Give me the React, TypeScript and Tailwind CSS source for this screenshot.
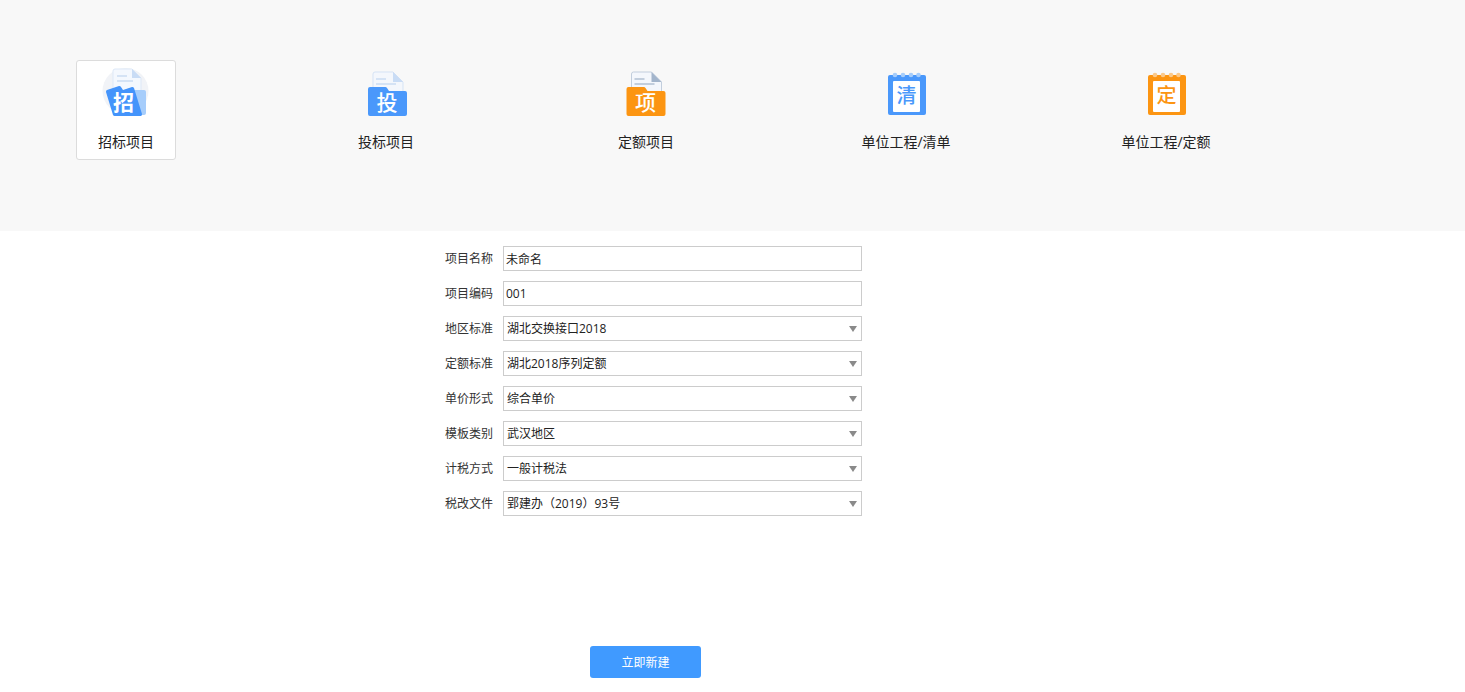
const cjk = "'Open Sans', 'Noto Sans CJK SC', sans-serif";

function Glyph({ ch, x, y, fill, size = 20, weight = 700 }: { ch: string; x: number; y: number; fill: string; size?: number; weight?: number }) {
  return (
    <text x={x} y={y} textAnchor="middle" fontSize={size} fontWeight={weight} fill={fill} style={{ fontFamily: "'Noto Sans CJK SC', sans-serif" }}>
      {ch}
    </text>
  );
}

function TenderIcon() {
  return (
    <svg width="60" height="60" viewBox="0 0 60 60">
      <circle cx="29.5" cy="29" r="23" fill="#f1f3f7" />
      <path d="M19 7h17l9 9v30H17V9a2 2 0 0 1 2-2z" fill="#f4f8fe" stroke="#dde8f7" />
      <path d="M36 7l9 9h-9z" fill="#c9dcf5" />
      <path d="M21 14h10M21 19h16" stroke="#d5e3f5" strokeWidth="2" />
      <path d="M38 28h10a2 2 0 0 1 2 2v21a2 2 0 0 1-2 2H38z" fill="#a6cdfb" />
      <path d="M11 28l12-4a2 2 0 0 1 2 1l2 3 9-3a2 2 0 0 1 2 1l8 26a2 2 0 0 1-1 2H19a2 2 0 0 1-2-1L10 30a2 2 0 0 1 1-2z" fill="#4494fb" />
      <Glyph ch="招" x={27.5} y={48} fill="#ffffff" size={21} />
    </svg>
  );
}

function FolderIcon({ ch, color, fold, line, dx = 0 }: { ch: string; color: string; fold: string; line: string; dx?: number }) {
  return (
    <svg width="60" height="60" viewBox="0 0 60 60">
      <g transform={`translate(${dx} 0)`}>
        <path d="M19 10h18l10 10v14H17V12a2 2 0 0 1 2-2z" fill="#f4f7fc" stroke={line} />
        <path d="M37 10l10 10H37z" fill={fold} />
        <path d="M20 17h10M20 22h20" stroke={line} strokeWidth="2" />
        <path d="M14 25h15a2 2 0 0 1 2 1l2 3h16a2 2 0 0 1 2 2v21a2 2 0 0 1-2 2H14a2 2 0 0 1-2-2V27a2 2 0 0 1 2-2z" fill={color} />
        <Glyph ch={ch} x={31} y={48} fill="#ffffff" weight={500} size={21} />
      </g>
    </svg>
  );
}

function NotebookIcon({ ch, color, ring }: { ch: string; color: string; ring: string }) {
  return (
    <svg width="60" height="60" viewBox="0 0 60 60">
      <rect x="12" y="13" width="38" height="40" rx="2" fill={color} />
      <rect x="17" y="19" width="27" height="31" rx="1" fill="#ffffff" />
      {[19, 27, 35, 42.5].map((cx) => (
        <circle key={cx} cx={cx} cy="13" r="2.3" fill={ring} />
      ))}
      <Glyph ch={ch} x={30.5} y={41} fill={color} weight={500} />
    </svg>
  );
}

const tiles = [
  { label: "招标项目", icon: <TenderIcon />, active: true },
  { label: "投标项目", icon: <FolderIcon ch="投" color="#4a98fb" fold="#c9dcf5" line="#d5e3f5" /> },
  { label: "定额项目", icon: <FolderIcon ch="项" color="#fc9512" fold="#a3b5cc" line="#c2cedd" dx={-1.5} /> },
  { label: "单位工程/清单", icon: <NotebookIcon ch="清" color="#4a98fb" ring="#a6cdfb" /> },
  { label: "单位工程/定额", icon: <NotebookIcon ch="定" color="#fc9512" ring="#fbc98a" /> },
];

const inputs = [
  { label: "项目名称", value: "未命名" },
  { label: "项目编码", value: "001" },
];

const selects = [
  { label: "地区标准", value: "湖北交换接口2018" },
  { label: "定额标准", value: "湖北2018序列定额" },
  { label: "单价形式", value: "综合单价" },
  { label: "模板类别", value: "武汉地区" },
  { label: "计税方式", value: "一般计税法" },
  { label: "税改文件", value: "郢建办（2019）93号" },
];

function Row({ label, children }: { label: string; children: React.ReactNode }) {
  return (
    <div className="flex h-[25px] items-center">
      <label className="w-[60px] text-right text-xs text-[#333]">{label}</label>
      <div className="ml-[10px] h-full w-[359px]">{children}</div>
    </div>
  );
}

export default function App() {
  return (
    <div className="h-[692px] overflow-hidden bg-white" style={{ fontFamily: cjk }}>
      <div className="flex h-[231px] gap-[160px] bg-[#f8f8f8] pl-[76px] pt-[60px]">
        {tiles.map((t) => (
          <div
            key={t.label}
            className={`flex h-[100px] w-[100px] flex-col items-center rounded-[3px] border pt-px ${
              t.active ? "border-[#dcdcdc] bg-white" : "border-transparent"
            }`}
          >
            {t.icon}
            <div className="mt-[10px] whitespace-nowrap text-sm leading-5 text-[#222]">{t.label}</div>
          </div>
        ))}
      </div>

      <div className="ml-[433px] flex flex-col gap-[10px] pt-[15px]">
        {inputs.map((f) => (
          <Row key={f.label} label={f.label}>
            <input
              readOnly
              defaultValue={f.value}
              className="block h-full w-full border border-[#ccc] px-[2px] text-xs text-[#222] outline-none"
            />
          </Row>
        ))}
        {selects.map((f) => (
          <Row key={f.label} label={f.label}>
            <div className="flex h-full w-full items-center justify-between border border-[#ccc] pl-[3px] pr-[4px] text-xs text-[#222]">
              <span>{f.value}</span>
              <svg width="8" height="6" viewBox="0 0 8 6" className="mt-px">
                <path d="M0 0h8L4 6z" fill="#8a8a8a" />
              </svg>
            </div>
          </Row>
        ))}
      </div>

      <button className="ml-[590px] mt-[130px] block h-8 w-[111px] rounded-[3px] bg-[#409aff] pt-px text-xs text-white">
        立即新建
      </button>
    </div>
  );
}
